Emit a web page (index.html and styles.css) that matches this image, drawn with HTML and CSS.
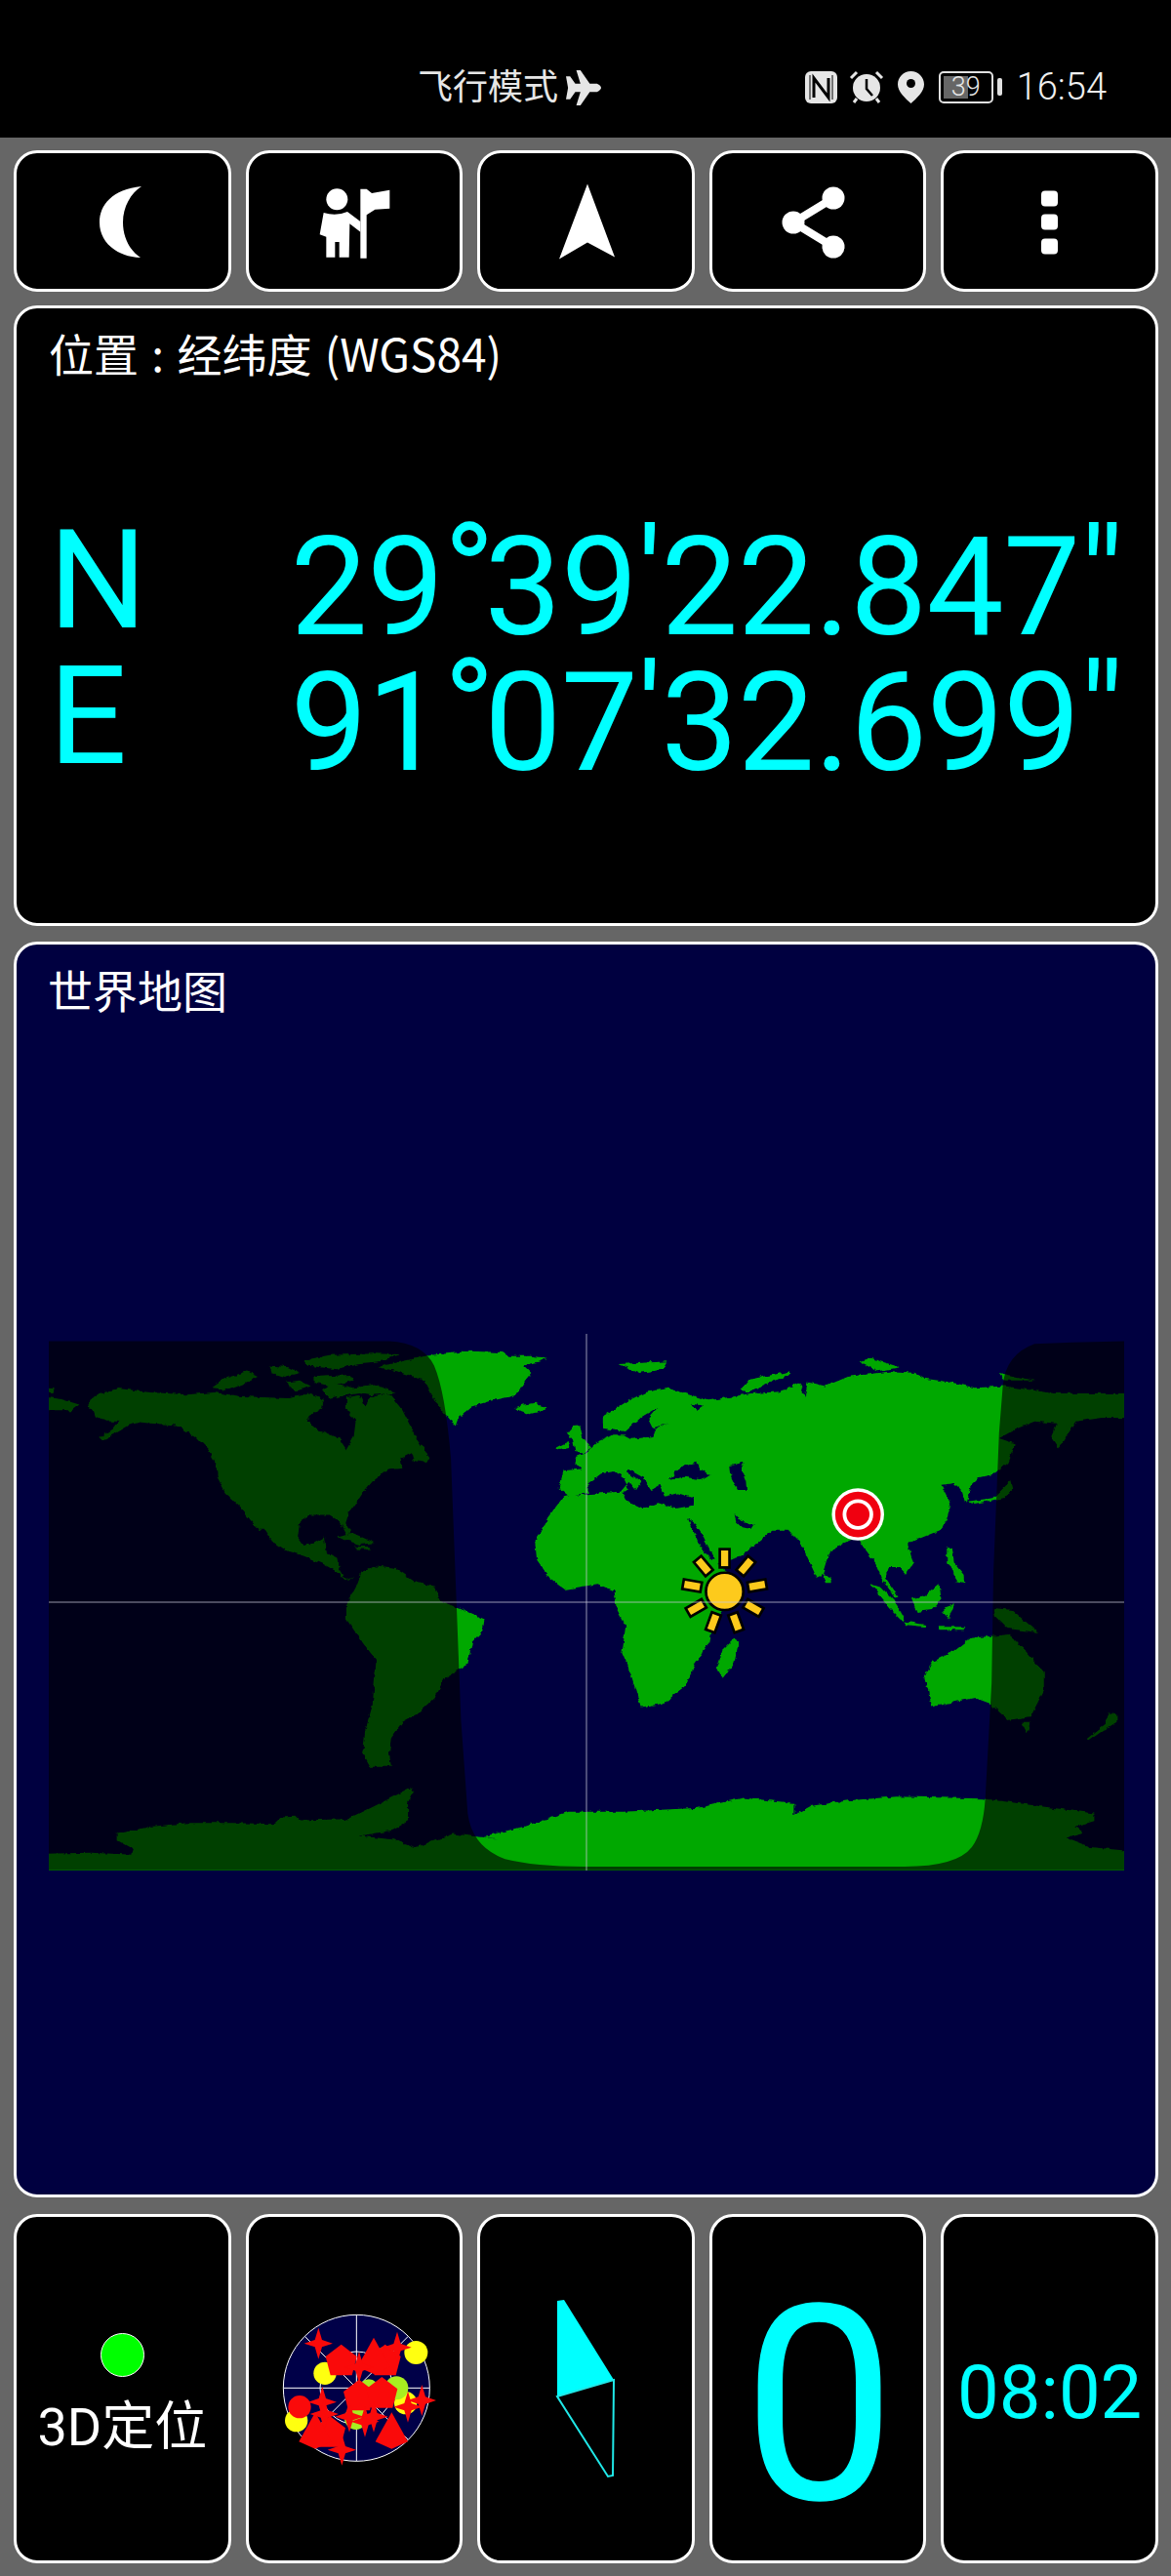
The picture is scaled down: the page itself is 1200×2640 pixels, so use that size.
FILE: index.html
```html
<!DOCTYPE html>
<html lang="zh">
<head>
    <meta charset="UTF-8">
    <meta name="viewport" content="width=device-width, initial-scale=1.0">
    <title>GPS</title>
    <link rel="stylesheet" href="styles.css">
</head>
<body>
    <div class="status-bar">
        <div class="status-mode">
            <span>飞行模式</span>
            <svg class="plane" viewBox="0 0 34 34"><path d="M0 6 L4 6 L9 13 L14 13 L10 0 L14 0 L23 13 L30 13 Q34 15 34 17 Q34 19 30 21 L23 21 L14 34 L10 34 L14 21 L9 21 L4 28 L0 28 L2 17 Z"/></svg>
        </div>
        <div class="status-icons">
            <svg class="nfc" viewBox="0 0 33 33"><rect width="33" height="33" rx="6"/><path d="M9 27 V7 L24 27 V7" fill="none" stroke="#000" stroke-width="3"/><path d="M5 4 V29 M28 4 V29" stroke="#000" stroke-width="1"/></svg>
            <svg class="alarm" viewBox="0 0 36 34"><circle cx="18" cy="18" r="14"/><path d="M18 9 V19 L24 26" fill="none" stroke="#000" stroke-width="2.5"/><path d="M2 8 L8 2 M34 8 L28 2 M8 29 L5 33 M28 29 L31 33" stroke="#e6e6e6" stroke-width="3" fill="none"/></svg>
            <svg class="pin" viewBox="0 0 27 33"><path d="M13.5 0 C6 0 0 6 0 13.5 C0 21 8 28 13.5 33 C19 28 27 21 27 13.5 C27 6 21 0 13.5 0Z"/><circle cx="13.5" cy="12.5" r="4.5" fill="#000"/></svg>
            <div class="battery-wrap">
                <div class="battery"><div class="battery-fill"></div><span class="battery-num">39</span></div>
                <div class="battery-cap"></div>
            </div>
            <span class="clock">16:54</span>
        </div>
    </div>

    <div class="page">
        <div class="row toolbar">
            <div class="card center">
                <svg class="icon" width="90" height="90" viewBox="0 0 90 90"><path d="M65 9 C35 12 22 28 22 46 C22 65 38 81 64 82 C52 74 46 60 46 46 C46 30 54 16 65 9Z"/></svg>
            </div>
            <div class="card center">
                <svg class="icon flag" width="120" height="110" viewBox="0 0 360 330">
                    <circle cx="133" cy="97" r="33"/>
                    <path d="M92 138 Q130 150 165 135 L205 165 L205 197 L172 172 L170 275 L140 275 L140 228 L127 228 L127 275 L100 275 L100 212 L80 205 Z"/>
                    <path d="M205 65 L224 65 L240 78 L295 68 L295 125 L250 128 L224 145 L224 278 L205 278 Z"/>
                </svg>
            </div>
            <div class="card center">
                <svg class="icon" width="80" height="90" viewBox="0 0 80 90"><path d="M42 6.5 L70 81.5 L42 66.5 L13 83.5 Z"/></svg>
            </div>
            <div class="card center">
                <svg class="icon" width="80" height="80" viewBox="0 0 80 80">
                    <path d="M56 16 L15 41 L56 66" fill="none" stroke="#fff" stroke-width="8"/>
                    <circle cx="56" cy="16" r="11.5"/><circle cx="15" cy="41" r="11.5"/><circle cx="56" cy="66" r="11.5"/>
                </svg>
            </div>
            <div class="card center">
                <svg class="icon" width="80" height="80" viewBox="0 0 80 80">
                    <rect x="31" y="8.5" width="17" height="16" rx="4"/><rect x="31" y="32.5" width="17" height="16" rx="4"/><rect x="31" y="57.5" width="17" height="16" rx="4"/>
                </svg>
            </div>
        </div>

        <div class="card position">
            <div class="card-title">位置 : 经纬度 (WGS84)</div>
            <div class="coords">
                <div class="coord-row"><span class="coord-label">N</span><span class="coord-value">29<span class="deg">°</span>39<span class="mark">'</span>22.847<span class="mark">"</span></span></div>
                <div class="coord-row"><span class="coord-label">E</span><span class="coord-value">91<span class="deg">°</span>07<span class="mark">'</span>32.699<span class="mark">"</span></span></div>
            </div>
        </div>

        <div class="card world">
            <div class="card-title">世界地图</div>
            <div class="map-wrap">
                <svg class="map" width="1102" height="551" viewBox="49 1365 1102 551">
                    <defs>
                        <filter id="rough" x="-5%" y="-5%" width="110%" height="110%" filterUnits="objectBoundingBox" primitiveUnits="userSpaceOnUse">
                            <feTurbulence type="fractalNoise" baseFrequency="0.16" numOctaves="2" seed="4" result="noise"/>
                            <feDisplacementMap in="SourceGraphic" in2="noise" scale="5" xChannelSelector="R" yChannelSelector="G"/>
                        </filter>
                        <clipPath id="mapClip"><rect x="49" y="1365" width="1102" height="550"/></clipPath>
                    </defs>
                    <g clip-path="url(#mapClip)">
                        <g filter="url(#rough)">
                            <!-- americas + antarctica, coords from left half -->
                            <g class="land" transform="translate(0 1340) scale(.38265)">
                                <polygon points="235,258 250,230 315,212 400,222 500,228 570,222 640,232 700,235 770,238 830,225 865,240 860,265 825,285 820,300 850,325 905,345 925,375 945,340 950,300 925,265 925,235 960,230 975,262 990,235 1040,225 1075,270 1110,340 1130,370 1148,395 1140,410 1105,405 1100,385 1070,400 1075,425 1035,430 1000,455 970,490 950,520 925,555 920,575 935,590 930,610 905,565 880,550 830,550 800,570 795,610 810,632 840,625 865,610 870,650 900,665 905,690 925,725 950,712 925,728 895,700 860,680 810,660 760,645 725,620 705,590 690,590 665,560 640,530 600,490 580,450 575,410 555,375 520,340 470,310 400,305 370,302 340,312 310,330 270,350 262,345 300,320 315,300 280,300 250,285 245,270"/>
                                <polygon points="565,210 600,185 660,165 690,180 650,200 610,215"/>
                                <polygon points="720,150 770,155 800,170 760,180 725,170"/>
                                <polygon points="810,135 880,122 1000,118 1070,120 1010,140 950,145 900,160 820,150"/>
                                <polygon points="760,195 800,190 830,205 790,220"/>
                                <polygon points="840,180 935,175 945,190 880,205 840,195"/>
                                <polygon points="860,215 885,195 945,210 1000,200 1060,225 1040,225 990,230 960,225 925,230 880,240"/>
                                <polygon points="1010,155 1070,140 1150,122 1260,112 1340,115 1360,125 1420,125 1465,130 1440,140 1400,150 1420,170 1400,195 1380,230 1310,245 1260,260 1225,290 1218,310 1200,295 1165,250 1150,220 1135,190 1060,165"/>
                                <polygon points="1378,262 1400,255 1430,250 1462,262 1450,272 1415,280 1390,272"/>
                                <polygon points="100,232 160,240 210,255 190,270 100,270"/>
                                <polygon points="100,205 143,210 140,222 100,220"/>
                                <polygon points="900,610 945,600 1000,625 960,630 925,618"/>
                                <polygon points="950,635 990,635 990,642 950,642"/>
                                <polygon points="950,745 965,705 1000,688 1060,695 1110,730 1165,745 1175,780 1225,800 1295,830 1290,860 1262,890 1250,950 1225,965 1190,985 1165,1035 1120,1080 1075,1105 1045,1145 1040,1190 1045,1225 990,1225 970,1190 975,1130 995,1060 1005,940 960,880 925,830 925,790"/>
                                <polygon points="100,1530 100,1458 240,1455 350,1460 355,1445 310,1420 310,1405 400,1385 500,1375 620,1375 730,1378 750,1360 790,1358 800,1368 930,1365 1000,1330 1100,1280 1105,1290 1090,1320 1090,1370 1050,1395 960,1410 1050,1420 1110,1440 1210,1405 1275,1412 1335,1418 1290,1412 1400,1385 1520,1345 1668,1345 1868,1335 1988,1308 2123,1322 2123,1355 2168,1330 2268,1315 2398,1305 2628,1310 2928,1350 2928,1370 2878,1385 2898,1400 2853,1415 2918,1440 3040,1452 3040,1530"/>
                            </g>
                            <!-- africa, eurasia, oceania -->
                            <g class="land" transform="translate(600 1340) scale(.38265)">
                                <polygon points="-50,497 -74,479 -61,431 -13,427 -30,409 -30,396 4,383 26,357 65,340 85,325 44,318 44,287 113,244 157,222 218,211 270,226 327,244 380,235 440,225 520,220 570,195 585,235 592,195 640,205 700,180 820,165 880,170 905,185 975,195 1040,210 1120,205 1250,225 1470,225 1470,290 1380,290 1310,300 1265,370 1245,340 1260,305 1200,300 1150,320 1105,345 1150,360 1130,410 1095,440 1050,450 1030,470 1015,520 1005,485 985,465 950,470 975,520 970,555 950,590 900,610 860,625 875,680 855,710 835,690 810,690 800,720 835,770 825,772 790,720 775,680 745,640 725,610 690,625 650,650 630,715 615,715 590,660 570,620 540,590 500,590 475,610 418,658 348,679 415,730 375,790 340,840 330,890 290,950 265,1010 205,1055 145,1065 120,980 95,920 105,850 80,800 75,755 30,735 0,740 -58,750 -98,720 -133,670 -138,620 -118,590 -104,557 -60,500"/>
                                <polygon points="635,705 655,720 655,735 640,735"/>
                                <polygon points="760,735 790,745 825,780 850,825 845,835 810,800"/>
                                <polygon points="850,835 910,845 905,850 855,845"/>
                                <polygon points="870,775 910,765 945,735 950,775 925,805 885,810"/>
                                <polygon points="955,800 985,790 970,830 955,815"/>
                                <polygon points="965,635 980,640 985,680 1010,710 1012,735 990,730 985,700 965,680"/>
                                <polygon points="940,850 1015,850 1010,858 945,858"/>
                                <polygon points="1090,800 1140,805 1210,865 1170,860 1130,855 1095,820"/>
                                <polygon points="1015,515 1090,505 1135,460 1140,480 1120,505 1040,520"/>
                                <polygon points="1250,340 1300,305 1265,370"/>
                                <polygon points="905,985 925,945 985,915 1030,880 1085,875 1130,870 1150,885 1225,970 1225,1020 1190,1090 1130,1100 1080,1055 1040,1040 990,1050 925,1065 915,1020"/>
                                <polygon points="1165,1105 1190,1105 1180,1135"/>
                                <polygon points="1340,1150 1390,1110 1400,1080 1420,1085 1420,1105 1380,1130 1345,1155"/>
                                <polygon points="350,960 365,910 395,880 408,890 395,950 365,990"/>
                                <polygon points="730,140 760,130 840,155 780,165"/>
                                <polygon points="1105,170 1200,190 1120,190"/>
                                <polygon points="410,215 470,180 550,170 430,220"/>
                            </g>
                            <!-- inland seas and islands of europe -->
                            <g transform="translate(560 1370) scale(.33333)">
                                <g class="sea">
                                    <polygon points="85,482 125,470 125,445 165,415 205,408 235,430 250,462 230,475 240,495 295,522 340,505 395,522 450,512 450,490 400,475 360,485 345,450 320,465 295,430 285,445 270,465 250,440 225,470 120,478"/>
                                    <polygon points="243,398 300,430 290,440 245,410"/>
                                    <polygon points="375,435 405,395 460,380 470,400 500,420 470,432 420,425"/>
                                    <polygon points="562,390 605,380 595,400 610,440 612,465 585,465 565,425"/>
                                    <polygon points="432,553 450,565 480,610 515,680 505,680 470,640"/>
                                    <polygon points="575,540 595,560 635,570 625,585 600,580 580,560"/>
                                    <polygon points="170,280 225,283 240,285 290,240 340,210 310,245 325,275 375,258 335,275 325,300 260,308 235,295 195,295"/>
                                    <polygon points="440,200 480,205 460,218"/>
                                </g>
                                <g class="land">
                                    <polygon points="25,335 65,315 70,335 35,342"/>
                                    <polygon points="60,290 75,270 100,268 108,300 135,338 110,352 85,345 78,310"/>
                                    <polygon points="595,155 620,125 750,100 750,110 680,135 620,162"/>
                                    <polygon points="220,78 370,70 355,95 280,105"/>
                                </g>
                            </g>
                        </g>
                        <!-- night side -->
                        <path class="night" transform="translate(0 1340) scale(.38265)" d="M128 85 L1040 85 Q1130 90 1160 150 Q1190 220 1205 400 L1220 790 L1232 1100 L1250 1350 Q1262 1440 1350 1472 Q1430 1492 1560 1492 L2420 1492 Q2560 1492 2600 1440 Q2630 1400 2636 1310 L2653 1000 L2658 700 L2673 330 L2683 205 Q2690 120 2768 92 L2868 88 L3008 85 L3008 1502 L128 1502 Z"/>
                        <!-- position marker and sun -->
                        <g transform="translate(600 1340) scale(.38265)">
                            <circle cx="727" cy="549" r="70" fill="#fff"/>
                            <circle cx="727" cy="549" r="61" fill="#f00010"/>
                            <circle cx="727" cy="549" r="41" fill="#fff"/>
                            <circle cx="727" cy="549" r="31" fill="#f00010"/>
                            <g class="sun" transform="translate(370 755)">
                                <circle r="50"/>
                                <rect x="-13" y="-113" width="26" height="49"/>
                                <rect x="-13" y="-113" width="26" height="49" transform="rotate(40)"/>
                                <rect x="-13" y="-113" width="26" height="49" transform="rotate(80)"/>
                                <rect x="-13" y="-113" width="26" height="49" transform="rotate(120)"/>
                                <rect x="-13" y="-113" width="26" height="49" transform="rotate(160)"/>
                                <rect x="-13" y="-113" width="26" height="49" transform="rotate(200)"/>
                                <rect x="-13" y="-113" width="26" height="49" transform="rotate(240)"/>
                                <rect x="-13" y="-113" width="26" height="49" transform="rotate(280)"/>
                                <rect x="-13" y="-113" width="26" height="49" transform="rotate(320)"/>
                            </g>
                        </g>
                        <line class="grid-line" x1="49" y1="1640" x2="1151" y2="1640"/>
                        <line class="grid-line" x1="600" y1="1365" x2="600" y2="1916"/>
                    </g>
                </svg>
            </div>
        </div>

        <div class="row stats">
            <div class="card center fix">
                <div class="fix-dot"></div>
                <div class="fix-text">3D定位</div>
            </div>
            <div class="card center skyplot">
                <svg width="180" height="180" viewBox="0 0 540 540">
                    <defs>
                        <path id="star" d="M0 -48 L11 -11 L44 0 L11 11 L0 48 L-11 11 L-44 0 L-11 -11Z"/>
                        <path id="penta" d="M0 -52 L48 -15 L33 43 L-33 43 L-48 -15Z"/>
                        <path id="tri" d="M0 -58 L50 32 L0 54 L-50 32Z"/>
                    </defs>
                    <circle cx="277" cy="232" r="225" fill="#000048" stroke="#fff" stroke-width="3"/>
                    <g stroke="#fff" stroke-width="3" fill="none">
                        <circle cx="277" cy="232" r="112"/>
                        <path d="M277 7 V457 M52 232 H502 M118 73 L436 391 M436 73 L118 391"/>
                    </g>
                    <g fill="#ffff10">
                        <circle cx="460" cy="123" r="36"/><circle cx="180" cy="187" r="35"/><circle cx="92" cy="332" r="35"/>
                        <circle cx="365" cy="135" r="30"/><circle cx="428" cy="278" r="35"/>
                    </g>
                    <g fill="#a8ee20">
                        <circle cx="400" cy="232" r="36"/><circle cx="315" cy="235" r="30"/><circle cx="275" cy="325" r="35"/>
                    </g>
                    <g fill="#fa0a0a">
                        <circle cx="102" cy="290" r="35"/>
                        <use href="#penta" x="230" y="150"/><use href="#penta" x="365" y="150"/>
                        <use href="#penta" x="285" y="258"/><use href="#penta" x="355" y="250"/>
                        <use href="#penta" x="195" y="370"/>
                        <use href="#tri" x="150" y="365"/><use href="#tri" x="385" y="365"/><use href="#tri" x="330" y="135"/>
                        <use href="#star" x="160" y="95"/><use href="#star" x="402" y="107"/><use href="#star" x="478" y="270"/>
                        <use href="#star" x="435" y="290"/><use href="#star" x="172" y="275"/><use href="#star" x="178" y="312"/>
                        <use href="#star" x="232" y="422"/><use href="#star" x="255" y="320"/><use href="#star" x="285" y="168"/>
                        <use href="#star" x="303" y="335"/><use href="#star" x="330" y="320"/>
                    </g>
                </svg>
            </div>
            <div class="card center">
                <svg width="80" height="200" viewBox="0 0 80 200">
                    <polygon points="11,10 18,9 69,91 11,108" fill="#00ffff"/>
                    <polygon points="11,108 69,91 68,189 63,190" fill="none" stroke="#20e8e8" stroke-width="2"/>
                </svg>
            </div>
            <div class="card center sat"><span class="sat-count">0</span></div>
            <div class="card center time"><span class="elapsed">08:02</span></div>
        </div>
    </div>
</body>
</html>
```

FILE: styles.css
```css
* {
    box-sizing: border-box;
}
body {
    margin: 0;
    width: 1200px;
    height: 2640px;
    background-color: #666666;
    color: #fff;
    font-family: Roboto, "Noto Sans CJK SC", sans-serif;
    overflow: hidden;
}
.status-bar {
    height: 141px;
    padding-top: 37px;
    background-color: #000;
    display: flex;
    align-items: center;
    color: #e6e6e6;
}
.status-bar svg {
    fill: #e6e6e6;
    flex: none;
}
.status-mode {
    margin-left: 428px;
    margin-top: 2px;
    display: flex;
    align-items: center;
    gap: 8px;
    font-size: 36px;
    line-height: 40px;
}
.status-bar .plane {
    width: 36px;
    height: 36px;
}
.status-icons {
    margin-left: auto;
    margin-right: 66px;
    display: flex;
    align-items: center;
    gap: 12px;
}
.nfc {
    width: 33px;
    height: 33px;
}
.alarm {
    width: 36px;
    height: 34px;
}
.pin {
    width: 27px;
    height: 33px;
    margin-left: 2px;
}
.battery-wrap {
    display: flex;
    align-items: center;
    gap: 4px;
    margin-left: 3px;
}
.battery {
    position: relative;
    width: 56px;
    height: 33px;
    border: 2.5px solid #e0e0e0;
    border-radius: 5px;
    text-align: center;
    font-size: 27px;
    font-weight: 300;
    line-height: 28px;
}
.battery-fill {
    position: absolute;
    left: 3px;
    top: 3px;
    bottom: 3px;
    width: 25px;
    background-color: #666;
}
.battery-num {
    position: relative;
}
.battery-cap {
    width: 5px;
    height: 18px;
    border-radius: 2px;
    background-color: #e0e0e0;
}
.clock {
    font-size: 38px;
    font-weight: 300;
    line-height: 40px;
    margin-left: 3px;
    color: #f0f0f0;
}
.page {
    padding: 13px 13px 0 14px;
    display: flex;
    flex-direction: column;
    gap: 14px;
}
.row {
    display: grid;
    grid-template-columns: repeat(5, 1fr);
    gap: 15px;
}
.card {
    background-color: #000;
    border: 3px solid #fff;
    border-radius: 24px;
}
.center {
    display: flex;
    align-items: center;
    justify-content: center;
}
.toolbar {
    height: 145px;
}
.icon {
    fill: #fff;
}
.flag {
    margin-right: 4px;
}
.card-title {
    font-family: "Noto Sans CJK SC", sans-serif;
    font-size: 46px;
    line-height: 48px;
    word-spacing: 3px;
}
.position {
    height: 636px;
    padding: 21px 33px 0;
    display: flex;
    flex-direction: column;
}
.coords {
    flex: 1;
    padding-top: 10px;
    display: flex;
    flex-direction: column;
    justify-content: center;
    color: #00ffff;
    font-size: 141px;
    line-height: 139px;
}
.coord-row {
    display: flex;
    justify-content: space-between;
    align-items: flex-start;
}
.coord-label {
    line-height: 126px;
}
.coord-value {
    letter-spacing: -0.7px;
}
.deg {
    letter-spacing: -11px;
    line-height: 0;
    vertical-align: 14px;
}
.mark {
    line-height: 0;
    vertical-align: 9px;
}
.world {
    height: 1287px;
    margin-top: 2px;
    background-color: #000040;
    padding: 21px 32px 5px;
    display: flex;
    flex-direction: column;
}
.map-wrap {
    flex: 1;
    padding-top: 4px;
    display: flex;
    align-items: center;
    justify-content: center;
}
.map {
    flex: none;
}
.land polygon {
    fill: #00a800;
}
.sea polygon {
    fill: #000040;
}
.night {
    fill: rgba(0, 0, 0, 0.62);
}
.sun circle,
.sun rect {
    fill: #fdca1c;
    stroke: #000;
    stroke-width: 7;
}
.grid-line {
    stroke: rgba(200, 200, 215, 0.75);
    stroke-width: 1;
}
.stats {
    height: 358px;
    margin-top: 3px;
}
.fix {
    flex-direction: column;
    gap: 22px;
    padding-top: 13px;
}
.fix-dot {
    width: 45px;
    height: 45px;
    border-radius: 50%;
    background-color: #00ff00;
    border: 1px solid #fff;
}
.fix-text {
    font-size: 54px;
    line-height: 60px;
}
.skyplot {
    padding-top: 24px;
}
.sat {
    padding-top: 34px;
    padding-left: 3px;
}
.sat-count {
    color: #00ffff;
    font-size: 280px;
    line-height: 1;
}
.time {
    padding-top: 8px;
}
.elapsed {
    color: #00ffff;
    font-size: 76px;
    line-height: 1;
}
```
